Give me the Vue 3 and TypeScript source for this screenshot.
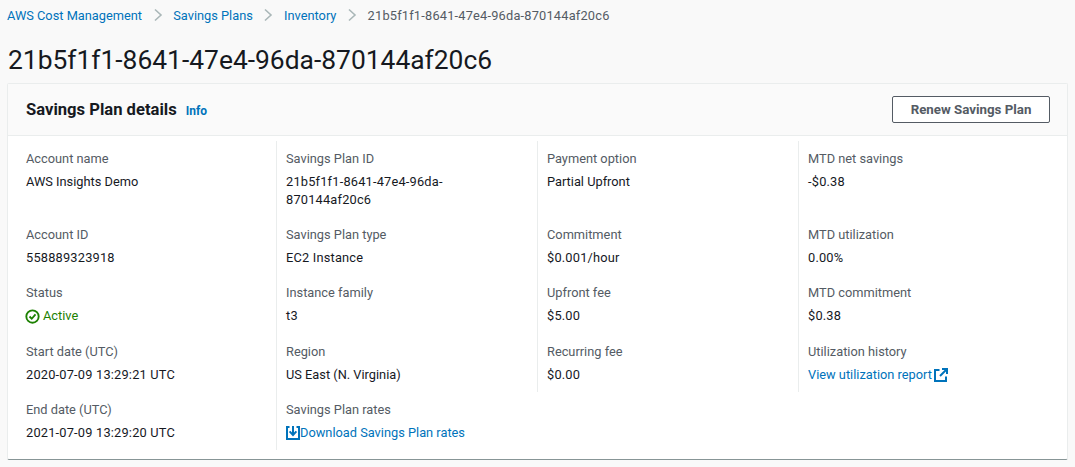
<template>
  <div class="page">
    <nav class="crumbs">
      <template v-for="c in crumbs" :key="c">
        <a class="link">{{ c }}</a>
        <svg class="chev" width="10" height="14" viewBox="0 0 10 14" fill="none" stroke="#aab7b8" stroke-width="1.6">
          <polyline points="2,1.5 8,7 2,12.5" />
        </svg>
      </template>
      <span class="current num">{{ planId }}</span>
    </nav>
    <h1 class="title">{{ planId }}</h1>
    <section class="card">
      <header class="card-head">
        <div class="head-left">
          <h2>Savings Plan details</h2>
          <a class="info">Info</a>
        </div>
        <button class="btn">Renew Savings Plan</button>
      </header>
      <div class="grid">
        <template v-for="(row, r) in rows" :key="r">
          <div v-for="item in row" :key="item.label" class="item">
            <div class="label">{{ item.label }}</div>
            <div v-if="item.kind === 'status'" class="value status">
              <svg width="15" height="15" viewBox="0 0 16 16" fill="none" stroke="#1d8102" stroke-width="2">
                <circle cx="8" cy="8" r="6.6" />
                <polyline points="4.8,8 7.2,10.4 11.2,5.8" />
              </svg>
              {{ item.value }}
            </div>
            <div v-else-if="item.kind === 'download'" class="value">
              <a class="link icon-link">
                <svg width="14" height="14" viewBox="0 0 14 14" fill="none" stroke="#0073bb" stroke-width="2">
                  <polyline points="3.5,1 1,1 1,13 13,13 13,1 10.5,1" />
                  <line x1="7" y1="0" x2="7" y2="8" />
                  <polyline points="3.6,5.4 7,9 10.4,5.4" />
                </svg>{{ item.value }}
              </a>
            </div>
            <div v-else-if="item.kind === 'external'" class="value">
              <a class="link icon-link ext">{{ item.value }}<svg width="14" height="14" viewBox="0 0 14 14" fill="none" stroke="#0073bb" stroke-width="2">
                  <polyline points="5.5,2 1,2 1,13 12,13 12,8.5" />
                  <polyline points="8,1 13,1 13,6" />
                  <line x1="13" y1="1" x2="6" y2="8" />
                </svg>
              </a>
            </div>
            <div v-else class="value" :class="{ num: /\d/.test(item.value) }">{{ item.value }}</div>
          </div>
        </template>
      </div>
    </section>
  </div>
</template>

<script setup lang="ts">
interface Item {
  label: string
  value: string
  kind?: 'status' | 'download' | 'external'
}

const planId = '21b5f1f1-8641-47e4-96da-870144af20c6'
const crumbs = ['AWS Cost Management', 'Savings Plans', 'Inventory']

const rows: Item[][] = [
  [
    { label: 'Account name', value: 'AWS Insights Demo' },
    { label: 'Savings Plan ID', value: planId },
    { label: 'Payment option', value: 'Partial Upfront' },
    { label: 'MTD net savings', value: '-$0.38' },
  ],
  [
    { label: 'Account ID', value: '558889323918' },
    { label: 'Savings Plan type', value: 'EC2 Instance' },
    { label: 'Commitment', value: '$0.001/hour' },
    { label: 'MTD utilization', value: '0.00%' },
  ],
  [
    { label: 'Status', value: 'Active', kind: 'status' },
    { label: 'Instance family', value: 't3' },
    { label: 'Upfront fee', value: '$5.00' },
    { label: 'MTD commitment', value: '$0.38' },
  ],
  [
    { label: 'Start date (UTC)', value: '2020-07-09 13:29:21 UTC' },
    { label: 'Region', value: 'US East (N. Virginia)' },
    { label: 'Recurring fee', value: '$0.00' },
    { label: 'Utilization history', value: 'View utilization report', kind: 'external' },
  ],
  [
    { label: 'End date (UTC)', value: '2021-07-09 13:29:20 UTC' },
    { label: 'Savings Plan rates', value: 'Download Savings Plan rates', kind: 'download' },
  ],
]
</script>

<style>
html, body {
  background: #f9f9f9;
}
</style>

<style scoped>
.page {
  height: 467px;
  overflow: hidden;
  box-sizing: border-box;
  padding: 6px 7px 0 7px;
  font-family: Roboto, "Open Sans", sans-serif;
  font-size: 12.8px;
  color: #16191f;
}
.crumbs {
  display: flex;
  align-items: center;
  height: 18px;
  gap: 10.6px;
  white-space: nowrap;
}
.link {
  color: #0073bb;
}
.current {
  color: #545b64;
}
.num {
  letter-spacing: 0.2px;
}
.title {
  margin: 19px 0 0 1px;
  font-size: 26.4px;
  line-height: 34px;
  font-weight: 400;
}
.card {
  margin-top: 6px;
  background: #fff;
  border: 1px solid #eaeded;
  border-bottom: 1px solid #879596;
  border-radius: 2px;
  height: 377px;
  box-sizing: border-box;
}
.card-head {
  display: flex;
  justify-content: space-between;
  align-items: center;
  height: 52px;
  box-sizing: border-box;
  padding: 0 17px 0 18px;
  background: #fafafa;
  border-bottom: 1px solid #eaeded;
}
.head-left {
  display: flex;
  align-items: baseline;
  gap: 9px;
}
.head-left h2 {
  margin: 0;
  font-size: 16.6px;
  font-weight: 700;
}
.info {
  color: #0073bb;
  font-size: 12px;
  font-weight: 700;
}
.btn {
  width: 158px;
  height: 27px;
  padding: 0;
  background: #fff;
  border: 1px solid #545b64;
  border-radius: 2px;
  color: #545b64;
  font: 700 13.3px Roboto, "Open Sans", sans-serif;
}
.grid {
  display: grid;
  grid-template-columns: 268px 261px 261px 1fr;
  padding-top: 5px;
}
.item {
  padding: 9px 18px 8.2px 9px;
  border-left: 1px solid #eaeded;
}
.item:nth-child(4n + 1) {
  padding-left: 18px;
  border-left: 0;
}
.label {
  color: #545b64;
  line-height: 18px;
}
.value {
  margin-top: 5px;
  line-height: 18px;
}
.status {
  display: flex;
  align-items: center;
  gap: 3px;
  margin-left: -1px;
  height: 18px;
  color: #1d8102;
}
.icon-link {
  display: flex;
  align-items: center;
  height: 18px;
}
.ext {
  gap: 2px;
}
</style>
